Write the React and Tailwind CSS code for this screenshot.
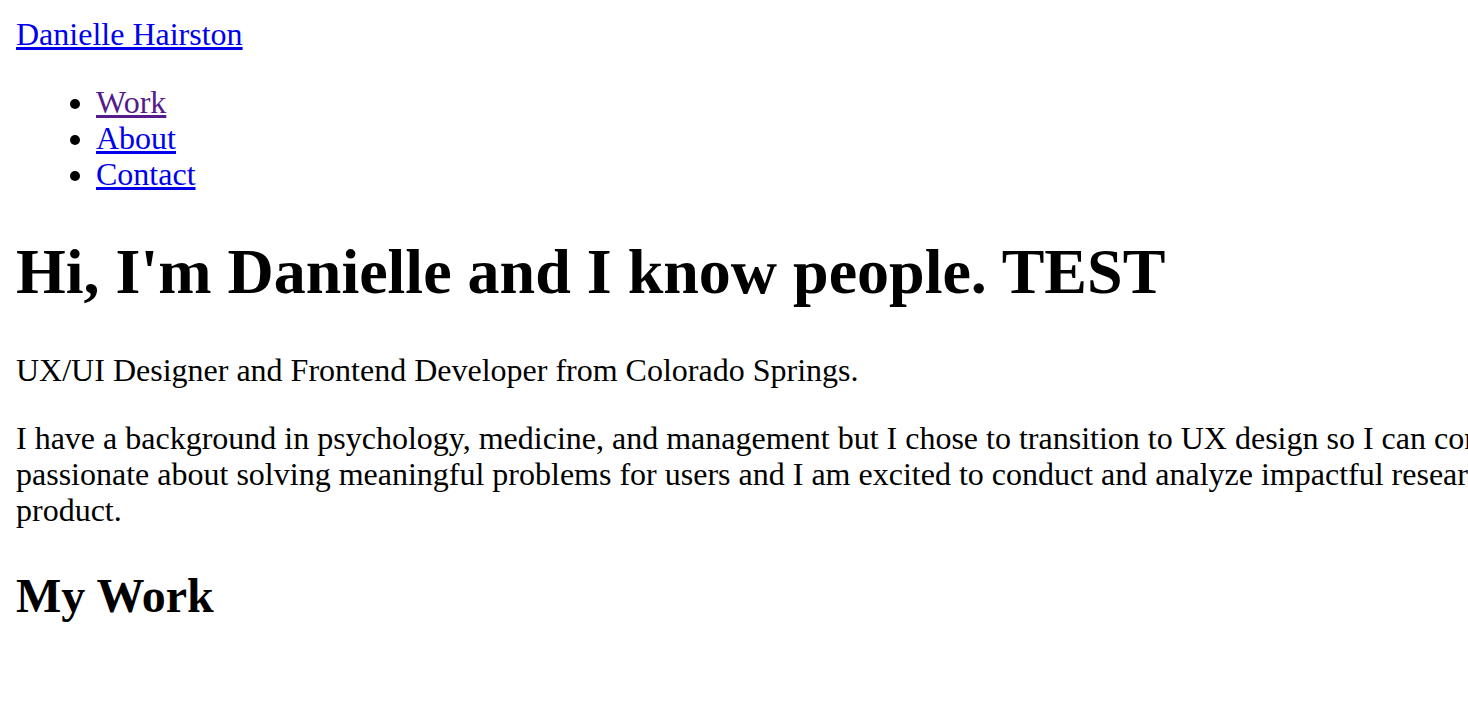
import React from 'react';

const serif = "font-['Liberation_Serif','Times_New_Roman',serif]";

function App() {
  const lines = [
    'I have a background in psychology, medicine, and management but I chose to transition to UX design so I can connect with people and build better experiences. I am',
    'passionate about solving meaningful problems for users and I am excited to conduct and analyze impactful research that shapes the',
    'product.',
  ];

  return (
    <div className={`${serif} min-h-screen w-full overflow-hidden bg-white p-4 text-[32px] leading-[36px] text-black`}>
      <header>
        <a href="#" className="text-[#0000ee] underline">
          Danielle Hairston
        </a>
        <nav>
          <ul className="my-8 list-disc pl-20">
            <li>
              <a href="#" className="text-[#551a8b] underline">Work</a>
            </li>
            <li>
              <a href="#" className="text-[#0000ee] underline">About</a>
            </li>
            <li>
              <a href="#" className="text-[#0000ee] underline">Contact</a>
            </li>
          </ul>
        </nav>
      </header>

      <main>
        <h1 className="mt-[43px] mb-[43px] text-[64px] font-bold leading-[74px] whitespace-nowrap">
          Hi, I'm Danielle and I know people. TEST
        </h1>
        <p className="my-8 whitespace-nowrap">UX/UI Designer and Frontend Developer from Colorado Springs.</p>
        <p className="my-8">
          {lines.map((line, i) => (
            <span key={i} className="block whitespace-nowrap">
              {line}
            </span>
          ))}
        </p>
        <h2 className="mt-10 text-[48px] font-bold leading-[55px]">My Work</h2>
      </main>
    </div>
  );
}

export default App;
